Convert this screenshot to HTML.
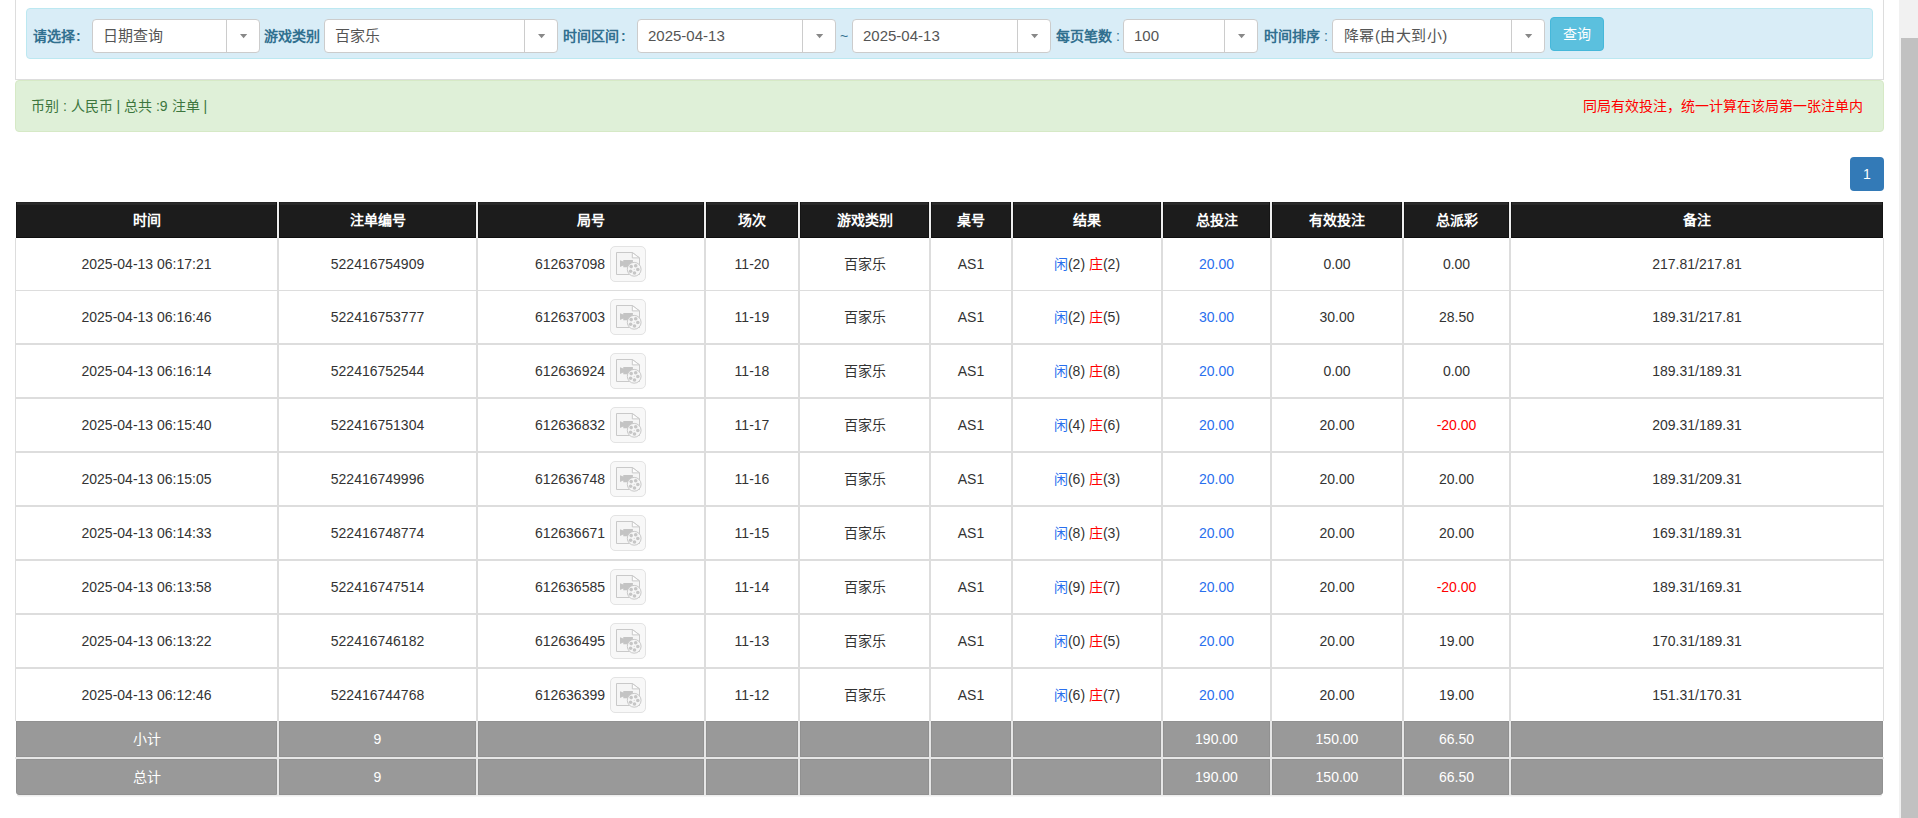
<!DOCTYPE html>
<html lang="zh-CN"><head><meta charset="utf-8"><style>
*{box-sizing:border-box}
html,body{margin:0;padding:0;width:1918px;height:818px;overflow:hidden;background:#fff;font-family:"Liberation Sans",sans-serif;font-size:14px;color:#333}
.a{position:absolute}
.t{position:absolute;white-space:nowrap;line-height:20px}
.c{text-align:center}
.lbl{color:#31708f;font-weight:bold;font-size:14px}
.sel{position:absolute;top:19px;height:34px;background:#fff;border:1px solid #ccc;border-radius:4px}
.sel .v{position:absolute;left:10px;top:6px;line-height:20px;font-size:15px;color:#555;white-space:nowrap}
.sel .d{position:absolute;right:0;top:0;bottom:0;width:33px;border-left:1px solid #ccc}
.sel .d svg{position:absolute;left:13px;top:13px}
.vl{position:absolute;width:2px;background:#ddd}
.hl{position:absolute;height:1px;background:#ddd}
.ib{position:absolute;width:36px;height:36px;border:1px solid #e3e3e3;border-radius:5px;background:#f8f8f8}
.ib svg{position:absolute;left:5px;top:5px}
.th{background:linear-gradient(#232323 0,#232323 1px,#2b2b2b 1px,#2a2a2a 2px,#252525 3px,#1c1c1c 3px);border-left:1px solid #151515;border-right:1px solid #151515;border-bottom:1px solid #0e0e0e}
.tf{background:#999;border:1px solid #919191}
.blue{color:#2a6fee}
.red{color:#f00}
</style></head><body>

<div class="a" style="left:15px;top:0;width:1px;height:80px;background:#ddd"></div>
<div class="a" style="left:1883px;top:0;width:1px;height:80px;background:#ddd"></div>
<div class="a" style="left:15px;top:79px;width:1869px;height:1px;background:#ddd"></div>
<div class="a" style="left:26px;top:8px;width:1847px;height:51px;background:#d9edf7;border:1px solid #bce8f1;border-radius:4px"></div>
<div class="t lbl" style="left:33px;top:26px">请选择<span style="margin-left:1px">:</span></div>
<div class="sel" style="left:92px;width:168px"><div class="v" style="">日期查询</div><div class="d"><svg width="8" height="6"><path d="M0 1H7.2L3.6 5.2Z" fill="#888"/></svg></div></div>
<div class="t lbl" style="left:264px;top:26px">游戏类别</div>
<div class="sel" style="left:324px;width:234px"><div class="v" style="">百家乐</div><div class="d"><svg width="8" height="6"><path d="M0 1H7.2L3.6 5.2Z" fill="#888"/></svg></div></div>
<div class="t lbl" style="left:563px;top:26px">时间区间<span style="margin-left:2px">:</span></div>
<div class="sel" style="left:637px;width:199px"><div class="v" style="">2025-04-13</div><div class="d"><svg width="8" height="6"><path d="M0 1H7.2L3.6 5.2Z" fill="#888"/></svg></div></div>
<div class="t" style="left:840px;top:26px;color:#31708f">~</div>
<div class="sel" style="left:852px;width:199px"><div class="v" style="">2025-04-13</div><div class="d"><svg width="8" height="6"><path d="M0 1H7.2L3.6 5.2Z" fill="#888"/></svg></div></div>
<div class="t lbl" style="left:1056px;top:26px">每页笔数<span style="font-weight:normal"> :</span></div>
<div class="sel" style="left:1123px;width:135px"><div class="v" style="">100</div><div class="d"><svg width="8" height="6"><path d="M0 1H7.2L3.6 5.2Z" fill="#888"/></svg></div></div>
<div class="t lbl" style="left:1264px;top:26px">时间排序<span style="font-weight:normal"> :</span></div>
<div class="sel" style="left:1332px;width:213px"><div class="v" style="left:11px;letter-spacing:0.45px">降幂(由大到小)</div><div class="d"><svg width="8" height="6"><path d="M0 1H7.2L3.6 5.2Z" fill="#888"/></svg></div></div>
<div class="a" style="left:1550px;top:17px;width:54px;height:34px;background:#5bc0de;border:1px solid #46b8da;border-radius:4px"></div>
<div class="t" style="left:1563px;top:24px;color:#fff">查询</div>
<div class="a" style="left:15px;top:80px;width:1869px;height:52px;background:#dff0d8;border:1px solid #d6e9c6;border-radius:4px"></div>
<div class="t" style="left:31px;top:96px;color:#3c763d">币别 : 人民币 | 总共 :9 注单 |</div>
<div class="t" style="left:1583px;top:96px;color:#f00">同局有效投注，统一计算在该局第一张注单内</div>
<div class="a" style="left:1850px;top:157px;width:34px;height:34px;background:#337ab7;border-radius:4px"></div>
<div class="t c" style="left:1850px;top:164px;width:34px;color:#fff">1</div>
<div class="a th" style="left:16px;top:202px;width:261px;height:36px"></div>
<div class="t c" style="left:16px;top:210px;width:261px;color:#fff;font-weight:bold">时间</div>
<div class="a th" style="left:279px;top:202px;width:197px;height:36px"></div>
<div class="t c" style="left:279px;top:210px;width:197px;color:#fff;font-weight:bold">注单编号</div>
<div class="a th" style="left:478px;top:202px;width:226px;height:36px"></div>
<div class="t c" style="left:478px;top:210px;width:226px;color:#fff;font-weight:bold">局号</div>
<div class="a th" style="left:706px;top:202px;width:92px;height:36px"></div>
<div class="t c" style="left:706px;top:210px;width:92px;color:#fff;font-weight:bold">场次</div>
<div class="a th" style="left:800px;top:202px;width:129px;height:36px"></div>
<div class="t c" style="left:800px;top:210px;width:129px;color:#fff;font-weight:bold">游戏类别</div>
<div class="a th" style="left:931px;top:202px;width:80px;height:36px"></div>
<div class="t c" style="left:931px;top:210px;width:80px;color:#fff;font-weight:bold">桌号</div>
<div class="a th" style="left:1013px;top:202px;width:148px;height:36px"></div>
<div class="t c" style="left:1013px;top:210px;width:148px;color:#fff;font-weight:bold">结果</div>
<div class="a th" style="left:1163px;top:202px;width:107px;height:36px"></div>
<div class="t c" style="left:1163px;top:210px;width:107px;color:#fff;font-weight:bold">总投注</div>
<div class="a th" style="left:1272px;top:202px;width:130px;height:36px"></div>
<div class="t c" style="left:1272px;top:210px;width:130px;color:#fff;font-weight:bold">有效投注</div>
<div class="a th" style="left:1404px;top:202px;width:105px;height:36px"></div>
<div class="t c" style="left:1404px;top:210px;width:105px;color:#fff;font-weight:bold">总派彩</div>
<div class="a th" style="left:1511px;top:202px;width:372px;height:36px"></div>
<div class="t c" style="left:1511px;top:210px;width:372px;color:#fff;font-weight:bold">备注</div>
<div class="vl" style="left:277px;top:202px;height:36px;background:#eeeeee"></div>
<div class="vl" style="left:476px;top:202px;height:36px;background:#eeeeee"></div>
<div class="vl" style="left:704px;top:202px;height:36px;background:#eeeeee"></div>
<div class="vl" style="left:798px;top:202px;height:36px;background:#eeeeee"></div>
<div class="vl" style="left:929px;top:202px;height:36px;background:#eeeeee"></div>
<div class="vl" style="left:1011px;top:202px;height:36px;background:#eeeeee"></div>
<div class="vl" style="left:1161px;top:202px;height:36px;background:#eeeeee"></div>
<div class="vl" style="left:1270px;top:202px;height:36px;background:#eeeeee"></div>
<div class="vl" style="left:1402px;top:202px;height:36px;background:#eeeeee"></div>
<div class="vl" style="left:1509px;top:202px;height:36px;background:#eeeeee"></div>
<div class="t c" style="left:16px;top:254px;width:261px">2025-04-13 06:17:21</div>
<div class="t c" style="left:279px;top:254px;width:197px">522416754909</div>
<div class="t" style="left:478px;top:254px;width:127px;text-align:right">612637098</div>
<div class="ib" style="left:610px;top:246px"><svg width="27" height="26" viewBox="0 0 27 26" style="overflow:visible"><path d="M0.5 0.5H16.3L23.5 5.9V22.5H0.5Z" fill="#f5f5f5" stroke="#c9c9c9" stroke-width="1"/><path d="M16.3 0.5V5.9H23.5Z" fill="#fdfdfd" stroke="#c9c9c9" stroke-width="1"/><path d="M4 8.2L7.3 9.6V8H16.9V15.2H7.3V13.6L4 15Z" fill="#c4c4c4"/><circle cx="18.2" cy="17.3" r="6.9" fill="#f6f6f6" stroke="#c9c9c9" stroke-width="1"/><circle cx="15.2" cy="14.6" r="1.8" fill="#c6c6c6"/><circle cx="19.7" cy="13.8" r="1.8" fill="#c6c6c6"/><circle cx="21.8" cy="17.5" r="1.8" fill="#c6c6c6"/><circle cx="18.5" cy="21" r="1.8" fill="#c6c6c6"/><circle cx="14.6" cy="19.3" r="1.8" fill="#c6c6c6"/><circle cx="18.2" cy="17.4" r="0.6" fill="#d5d5d5"/></svg></div>
<div class="t c" style="left:706px;top:254px;width:92px">11-20</div>
<div class="t c" style="left:800px;top:254px;width:129px">百家乐</div>
<div class="t c" style="left:931px;top:254px;width:80px">AS1</div>
<div class="t c" style="left:1013px;top:254px;width:148px"><span class="blue">闲</span>(2) <span class="red">庄</span>(2)</div>
<div class="t c" style="left:1163px;top:254px;width:107px"><span class="blue">20.00</span></div>
<div class="t c" style="left:1272px;top:254px;width:130px">0.00</div>
<div class="t c" style="left:1404px;top:254px;width:105px">0.00</div>
<div class="t c" style="left:1511px;top:254px;width:372px">217.81/217.81</div>
<div class="hl" style="left:15px;top:290px;width:1869px;height:1px"></div>
<div class="t c" style="left:16px;top:307px;width:261px">2025-04-13 06:16:46</div>
<div class="t c" style="left:279px;top:307px;width:197px">522416753777</div>
<div class="t" style="left:478px;top:307px;width:127px;text-align:right">612637003</div>
<div class="ib" style="left:610px;top:299px"><svg width="27" height="26" viewBox="0 0 27 26" style="overflow:visible"><path d="M0.5 0.5H16.3L23.5 5.9V22.5H0.5Z" fill="#f5f5f5" stroke="#c9c9c9" stroke-width="1"/><path d="M16.3 0.5V5.9H23.5Z" fill="#fdfdfd" stroke="#c9c9c9" stroke-width="1"/><path d="M4 8.2L7.3 9.6V8H16.9V15.2H7.3V13.6L4 15Z" fill="#c4c4c4"/><circle cx="18.2" cy="17.3" r="6.9" fill="#f6f6f6" stroke="#c9c9c9" stroke-width="1"/><circle cx="15.2" cy="14.6" r="1.8" fill="#c6c6c6"/><circle cx="19.7" cy="13.8" r="1.8" fill="#c6c6c6"/><circle cx="21.8" cy="17.5" r="1.8" fill="#c6c6c6"/><circle cx="18.5" cy="21" r="1.8" fill="#c6c6c6"/><circle cx="14.6" cy="19.3" r="1.8" fill="#c6c6c6"/><circle cx="18.2" cy="17.4" r="0.6" fill="#d5d5d5"/></svg></div>
<div class="t c" style="left:706px;top:307px;width:92px">11-19</div>
<div class="t c" style="left:800px;top:307px;width:129px">百家乐</div>
<div class="t c" style="left:931px;top:307px;width:80px">AS1</div>
<div class="t c" style="left:1013px;top:307px;width:148px"><span class="blue">闲</span>(2) <span class="red">庄</span>(5)</div>
<div class="t c" style="left:1163px;top:307px;width:107px"><span class="blue">30.00</span></div>
<div class="t c" style="left:1272px;top:307px;width:130px">30.00</div>
<div class="t c" style="left:1404px;top:307px;width:105px">28.50</div>
<div class="t c" style="left:1511px;top:307px;width:372px">189.31/217.81</div>
<div class="hl" style="left:15px;top:343px;width:1869px;height:2px"></div>
<div class="t c" style="left:16px;top:361px;width:261px">2025-04-13 06:16:14</div>
<div class="t c" style="left:279px;top:361px;width:197px">522416752544</div>
<div class="t" style="left:478px;top:361px;width:127px;text-align:right">612636924</div>
<div class="ib" style="left:610px;top:353px"><svg width="27" height="26" viewBox="0 0 27 26" style="overflow:visible"><path d="M0.5 0.5H16.3L23.5 5.9V22.5H0.5Z" fill="#f5f5f5" stroke="#c9c9c9" stroke-width="1"/><path d="M16.3 0.5V5.9H23.5Z" fill="#fdfdfd" stroke="#c9c9c9" stroke-width="1"/><path d="M4 8.2L7.3 9.6V8H16.9V15.2H7.3V13.6L4 15Z" fill="#c4c4c4"/><circle cx="18.2" cy="17.3" r="6.9" fill="#f6f6f6" stroke="#c9c9c9" stroke-width="1"/><circle cx="15.2" cy="14.6" r="1.8" fill="#c6c6c6"/><circle cx="19.7" cy="13.8" r="1.8" fill="#c6c6c6"/><circle cx="21.8" cy="17.5" r="1.8" fill="#c6c6c6"/><circle cx="18.5" cy="21" r="1.8" fill="#c6c6c6"/><circle cx="14.6" cy="19.3" r="1.8" fill="#c6c6c6"/><circle cx="18.2" cy="17.4" r="0.6" fill="#d5d5d5"/></svg></div>
<div class="t c" style="left:706px;top:361px;width:92px">11-18</div>
<div class="t c" style="left:800px;top:361px;width:129px">百家乐</div>
<div class="t c" style="left:931px;top:361px;width:80px">AS1</div>
<div class="t c" style="left:1013px;top:361px;width:148px"><span class="blue">闲</span>(8) <span class="red">庄</span>(8)</div>
<div class="t c" style="left:1163px;top:361px;width:107px"><span class="blue">20.00</span></div>
<div class="t c" style="left:1272px;top:361px;width:130px">0.00</div>
<div class="t c" style="left:1404px;top:361px;width:105px">0.00</div>
<div class="t c" style="left:1511px;top:361px;width:372px">189.31/189.31</div>
<div class="hl" style="left:15px;top:397px;width:1869px;height:2px"></div>
<div class="t c" style="left:16px;top:415px;width:261px">2025-04-13 06:15:40</div>
<div class="t c" style="left:279px;top:415px;width:197px">522416751304</div>
<div class="t" style="left:478px;top:415px;width:127px;text-align:right">612636832</div>
<div class="ib" style="left:610px;top:407px"><svg width="27" height="26" viewBox="0 0 27 26" style="overflow:visible"><path d="M0.5 0.5H16.3L23.5 5.9V22.5H0.5Z" fill="#f5f5f5" stroke="#c9c9c9" stroke-width="1"/><path d="M16.3 0.5V5.9H23.5Z" fill="#fdfdfd" stroke="#c9c9c9" stroke-width="1"/><path d="M4 8.2L7.3 9.6V8H16.9V15.2H7.3V13.6L4 15Z" fill="#c4c4c4"/><circle cx="18.2" cy="17.3" r="6.9" fill="#f6f6f6" stroke="#c9c9c9" stroke-width="1"/><circle cx="15.2" cy="14.6" r="1.8" fill="#c6c6c6"/><circle cx="19.7" cy="13.8" r="1.8" fill="#c6c6c6"/><circle cx="21.8" cy="17.5" r="1.8" fill="#c6c6c6"/><circle cx="18.5" cy="21" r="1.8" fill="#c6c6c6"/><circle cx="14.6" cy="19.3" r="1.8" fill="#c6c6c6"/><circle cx="18.2" cy="17.4" r="0.6" fill="#d5d5d5"/></svg></div>
<div class="t c" style="left:706px;top:415px;width:92px">11-17</div>
<div class="t c" style="left:800px;top:415px;width:129px">百家乐</div>
<div class="t c" style="left:931px;top:415px;width:80px">AS1</div>
<div class="t c" style="left:1013px;top:415px;width:148px"><span class="blue">闲</span>(4) <span class="red">庄</span>(6)</div>
<div class="t c" style="left:1163px;top:415px;width:107px"><span class="blue">20.00</span></div>
<div class="t c" style="left:1272px;top:415px;width:130px">20.00</div>
<div class="t c" style="left:1404px;top:415px;width:105px"><span class="red">-20.00</span></div>
<div class="t c" style="left:1511px;top:415px;width:372px">209.31/189.31</div>
<div class="hl" style="left:15px;top:451px;width:1869px;height:2px"></div>
<div class="t c" style="left:16px;top:469px;width:261px">2025-04-13 06:15:05</div>
<div class="t c" style="left:279px;top:469px;width:197px">522416749996</div>
<div class="t" style="left:478px;top:469px;width:127px;text-align:right">612636748</div>
<div class="ib" style="left:610px;top:461px"><svg width="27" height="26" viewBox="0 0 27 26" style="overflow:visible"><path d="M0.5 0.5H16.3L23.5 5.9V22.5H0.5Z" fill="#f5f5f5" stroke="#c9c9c9" stroke-width="1"/><path d="M16.3 0.5V5.9H23.5Z" fill="#fdfdfd" stroke="#c9c9c9" stroke-width="1"/><path d="M4 8.2L7.3 9.6V8H16.9V15.2H7.3V13.6L4 15Z" fill="#c4c4c4"/><circle cx="18.2" cy="17.3" r="6.9" fill="#f6f6f6" stroke="#c9c9c9" stroke-width="1"/><circle cx="15.2" cy="14.6" r="1.8" fill="#c6c6c6"/><circle cx="19.7" cy="13.8" r="1.8" fill="#c6c6c6"/><circle cx="21.8" cy="17.5" r="1.8" fill="#c6c6c6"/><circle cx="18.5" cy="21" r="1.8" fill="#c6c6c6"/><circle cx="14.6" cy="19.3" r="1.8" fill="#c6c6c6"/><circle cx="18.2" cy="17.4" r="0.6" fill="#d5d5d5"/></svg></div>
<div class="t c" style="left:706px;top:469px;width:92px">11-16</div>
<div class="t c" style="left:800px;top:469px;width:129px">百家乐</div>
<div class="t c" style="left:931px;top:469px;width:80px">AS1</div>
<div class="t c" style="left:1013px;top:469px;width:148px"><span class="blue">闲</span>(6) <span class="red">庄</span>(3)</div>
<div class="t c" style="left:1163px;top:469px;width:107px"><span class="blue">20.00</span></div>
<div class="t c" style="left:1272px;top:469px;width:130px">20.00</div>
<div class="t c" style="left:1404px;top:469px;width:105px">20.00</div>
<div class="t c" style="left:1511px;top:469px;width:372px">189.31/209.31</div>
<div class="hl" style="left:15px;top:505px;width:1869px;height:2px"></div>
<div class="t c" style="left:16px;top:523px;width:261px">2025-04-13 06:14:33</div>
<div class="t c" style="left:279px;top:523px;width:197px">522416748774</div>
<div class="t" style="left:478px;top:523px;width:127px;text-align:right">612636671</div>
<div class="ib" style="left:610px;top:515px"><svg width="27" height="26" viewBox="0 0 27 26" style="overflow:visible"><path d="M0.5 0.5H16.3L23.5 5.9V22.5H0.5Z" fill="#f5f5f5" stroke="#c9c9c9" stroke-width="1"/><path d="M16.3 0.5V5.9H23.5Z" fill="#fdfdfd" stroke="#c9c9c9" stroke-width="1"/><path d="M4 8.2L7.3 9.6V8H16.9V15.2H7.3V13.6L4 15Z" fill="#c4c4c4"/><circle cx="18.2" cy="17.3" r="6.9" fill="#f6f6f6" stroke="#c9c9c9" stroke-width="1"/><circle cx="15.2" cy="14.6" r="1.8" fill="#c6c6c6"/><circle cx="19.7" cy="13.8" r="1.8" fill="#c6c6c6"/><circle cx="21.8" cy="17.5" r="1.8" fill="#c6c6c6"/><circle cx="18.5" cy="21" r="1.8" fill="#c6c6c6"/><circle cx="14.6" cy="19.3" r="1.8" fill="#c6c6c6"/><circle cx="18.2" cy="17.4" r="0.6" fill="#d5d5d5"/></svg></div>
<div class="t c" style="left:706px;top:523px;width:92px">11-15</div>
<div class="t c" style="left:800px;top:523px;width:129px">百家乐</div>
<div class="t c" style="left:931px;top:523px;width:80px">AS1</div>
<div class="t c" style="left:1013px;top:523px;width:148px"><span class="blue">闲</span>(8) <span class="red">庄</span>(3)</div>
<div class="t c" style="left:1163px;top:523px;width:107px"><span class="blue">20.00</span></div>
<div class="t c" style="left:1272px;top:523px;width:130px">20.00</div>
<div class="t c" style="left:1404px;top:523px;width:105px">20.00</div>
<div class="t c" style="left:1511px;top:523px;width:372px">169.31/189.31</div>
<div class="hl" style="left:15px;top:559px;width:1869px;height:2px"></div>
<div class="t c" style="left:16px;top:577px;width:261px">2025-04-13 06:13:58</div>
<div class="t c" style="left:279px;top:577px;width:197px">522416747514</div>
<div class="t" style="left:478px;top:577px;width:127px;text-align:right">612636585</div>
<div class="ib" style="left:610px;top:569px"><svg width="27" height="26" viewBox="0 0 27 26" style="overflow:visible"><path d="M0.5 0.5H16.3L23.5 5.9V22.5H0.5Z" fill="#f5f5f5" stroke="#c9c9c9" stroke-width="1"/><path d="M16.3 0.5V5.9H23.5Z" fill="#fdfdfd" stroke="#c9c9c9" stroke-width="1"/><path d="M4 8.2L7.3 9.6V8H16.9V15.2H7.3V13.6L4 15Z" fill="#c4c4c4"/><circle cx="18.2" cy="17.3" r="6.9" fill="#f6f6f6" stroke="#c9c9c9" stroke-width="1"/><circle cx="15.2" cy="14.6" r="1.8" fill="#c6c6c6"/><circle cx="19.7" cy="13.8" r="1.8" fill="#c6c6c6"/><circle cx="21.8" cy="17.5" r="1.8" fill="#c6c6c6"/><circle cx="18.5" cy="21" r="1.8" fill="#c6c6c6"/><circle cx="14.6" cy="19.3" r="1.8" fill="#c6c6c6"/><circle cx="18.2" cy="17.4" r="0.6" fill="#d5d5d5"/></svg></div>
<div class="t c" style="left:706px;top:577px;width:92px">11-14</div>
<div class="t c" style="left:800px;top:577px;width:129px">百家乐</div>
<div class="t c" style="left:931px;top:577px;width:80px">AS1</div>
<div class="t c" style="left:1013px;top:577px;width:148px"><span class="blue">闲</span>(9) <span class="red">庄</span>(7)</div>
<div class="t c" style="left:1163px;top:577px;width:107px"><span class="blue">20.00</span></div>
<div class="t c" style="left:1272px;top:577px;width:130px">20.00</div>
<div class="t c" style="left:1404px;top:577px;width:105px"><span class="red">-20.00</span></div>
<div class="t c" style="left:1511px;top:577px;width:372px">189.31/169.31</div>
<div class="hl" style="left:15px;top:613px;width:1869px;height:2px"></div>
<div class="t c" style="left:16px;top:631px;width:261px">2025-04-13 06:13:22</div>
<div class="t c" style="left:279px;top:631px;width:197px">522416746182</div>
<div class="t" style="left:478px;top:631px;width:127px;text-align:right">612636495</div>
<div class="ib" style="left:610px;top:623px"><svg width="27" height="26" viewBox="0 0 27 26" style="overflow:visible"><path d="M0.5 0.5H16.3L23.5 5.9V22.5H0.5Z" fill="#f5f5f5" stroke="#c9c9c9" stroke-width="1"/><path d="M16.3 0.5V5.9H23.5Z" fill="#fdfdfd" stroke="#c9c9c9" stroke-width="1"/><path d="M4 8.2L7.3 9.6V8H16.9V15.2H7.3V13.6L4 15Z" fill="#c4c4c4"/><circle cx="18.2" cy="17.3" r="6.9" fill="#f6f6f6" stroke="#c9c9c9" stroke-width="1"/><circle cx="15.2" cy="14.6" r="1.8" fill="#c6c6c6"/><circle cx="19.7" cy="13.8" r="1.8" fill="#c6c6c6"/><circle cx="21.8" cy="17.5" r="1.8" fill="#c6c6c6"/><circle cx="18.5" cy="21" r="1.8" fill="#c6c6c6"/><circle cx="14.6" cy="19.3" r="1.8" fill="#c6c6c6"/><circle cx="18.2" cy="17.4" r="0.6" fill="#d5d5d5"/></svg></div>
<div class="t c" style="left:706px;top:631px;width:92px">11-13</div>
<div class="t c" style="left:800px;top:631px;width:129px">百家乐</div>
<div class="t c" style="left:931px;top:631px;width:80px">AS1</div>
<div class="t c" style="left:1013px;top:631px;width:148px"><span class="blue">闲</span>(0) <span class="red">庄</span>(5)</div>
<div class="t c" style="left:1163px;top:631px;width:107px"><span class="blue">20.00</span></div>
<div class="t c" style="left:1272px;top:631px;width:130px">20.00</div>
<div class="t c" style="left:1404px;top:631px;width:105px">19.00</div>
<div class="t c" style="left:1511px;top:631px;width:372px">170.31/189.31</div>
<div class="hl" style="left:15px;top:667px;width:1869px;height:2px"></div>
<div class="t c" style="left:16px;top:685px;width:261px">2025-04-13 06:12:46</div>
<div class="t c" style="left:279px;top:685px;width:197px">522416744768</div>
<div class="t" style="left:478px;top:685px;width:127px;text-align:right">612636399</div>
<div class="ib" style="left:610px;top:677px"><svg width="27" height="26" viewBox="0 0 27 26" style="overflow:visible"><path d="M0.5 0.5H16.3L23.5 5.9V22.5H0.5Z" fill="#f5f5f5" stroke="#c9c9c9" stroke-width="1"/><path d="M16.3 0.5V5.9H23.5Z" fill="#fdfdfd" stroke="#c9c9c9" stroke-width="1"/><path d="M4 8.2L7.3 9.6V8H16.9V15.2H7.3V13.6L4 15Z" fill="#c4c4c4"/><circle cx="18.2" cy="17.3" r="6.9" fill="#f6f6f6" stroke="#c9c9c9" stroke-width="1"/><circle cx="15.2" cy="14.6" r="1.8" fill="#c6c6c6"/><circle cx="19.7" cy="13.8" r="1.8" fill="#c6c6c6"/><circle cx="21.8" cy="17.5" r="1.8" fill="#c6c6c6"/><circle cx="18.5" cy="21" r="1.8" fill="#c6c6c6"/><circle cx="14.6" cy="19.3" r="1.8" fill="#c6c6c6"/><circle cx="18.2" cy="17.4" r="0.6" fill="#d5d5d5"/></svg></div>
<div class="t c" style="left:706px;top:685px;width:92px">11-12</div>
<div class="t c" style="left:800px;top:685px;width:129px">百家乐</div>
<div class="t c" style="left:931px;top:685px;width:80px">AS1</div>
<div class="t c" style="left:1013px;top:685px;width:148px"><span class="blue">闲</span>(6) <span class="red">庄</span>(7)</div>
<div class="t c" style="left:1163px;top:685px;width:107px"><span class="blue">20.00</span></div>
<div class="t c" style="left:1272px;top:685px;width:130px">20.00</div>
<div class="t c" style="left:1404px;top:685px;width:105px">19.00</div>
<div class="t c" style="left:1511px;top:685px;width:372px">151.31/170.31</div>
<div class="vl" style="left:15px;top:238px;height:483px;width:1px"></div>
<div class="vl" style="left:277px;top:238px;height:483px;width:2px"></div>
<div class="vl" style="left:476px;top:238px;height:483px;width:2px"></div>
<div class="vl" style="left:704px;top:238px;height:483px;width:2px"></div>
<div class="vl" style="left:798px;top:238px;height:483px;width:2px"></div>
<div class="vl" style="left:929px;top:238px;height:483px;width:2px"></div>
<div class="vl" style="left:1011px;top:238px;height:483px;width:2px"></div>
<div class="vl" style="left:1161px;top:238px;height:483px;width:2px"></div>
<div class="vl" style="left:1270px;top:238px;height:483px;width:2px"></div>
<div class="vl" style="left:1402px;top:238px;height:483px;width:2px"></div>
<div class="vl" style="left:1509px;top:238px;height:483px;width:2px"></div>
<div class="vl" style="left:1883px;top:238px;height:483px;width:1px"></div>
<div class="a tf" style="left:16px;top:721px;width:261px;height:36px;"></div>
<div class="a tf" style="left:279px;top:721px;width:197px;height:36px;"></div>
<div class="a tf" style="left:478px;top:721px;width:226px;height:36px;"></div>
<div class="a tf" style="left:706px;top:721px;width:92px;height:36px;"></div>
<div class="a tf" style="left:800px;top:721px;width:129px;height:36px;"></div>
<div class="a tf" style="left:931px;top:721px;width:80px;height:36px;"></div>
<div class="a tf" style="left:1013px;top:721px;width:148px;height:36px;"></div>
<div class="a tf" style="left:1163px;top:721px;width:107px;height:36px;"></div>
<div class="a tf" style="left:1272px;top:721px;width:130px;height:36px;"></div>
<div class="a tf" style="left:1404px;top:721px;width:105px;height:36px;"></div>
<div class="a tf" style="left:1511px;top:721px;width:372px;height:36px;"></div>
<div class="t c" style="left:16px;top:729px;width:261px;color:#fff">小计</div>
<div class="t c" style="left:279px;top:729px;width:197px;color:#fff">9</div>
<div class="t c" style="left:1163px;top:729px;width:107px;color:#fff">190.00</div>
<div class="t c" style="left:1272px;top:729px;width:130px;color:#fff">150.00</div>
<div class="t c" style="left:1404px;top:729px;width:105px;color:#fff">66.50</div>
<div class="a tf" style="left:16px;top:759px;width:261px;height:36px;border-bottom-left-radius:3px;"></div>
<div class="a tf" style="left:279px;top:759px;width:197px;height:36px;"></div>
<div class="a tf" style="left:478px;top:759px;width:226px;height:36px;"></div>
<div class="a tf" style="left:706px;top:759px;width:92px;height:36px;"></div>
<div class="a tf" style="left:800px;top:759px;width:129px;height:36px;"></div>
<div class="a tf" style="left:931px;top:759px;width:80px;height:36px;"></div>
<div class="a tf" style="left:1013px;top:759px;width:148px;height:36px;"></div>
<div class="a tf" style="left:1163px;top:759px;width:107px;height:36px;"></div>
<div class="a tf" style="left:1272px;top:759px;width:130px;height:36px;"></div>
<div class="a tf" style="left:1404px;top:759px;width:105px;height:36px;"></div>
<div class="a tf" style="left:1511px;top:759px;width:372px;height:36px;border-bottom-right-radius:3px;"></div>
<div class="t c" style="left:16px;top:767px;width:261px;color:#fff">总计</div>
<div class="t c" style="left:279px;top:767px;width:197px;color:#fff">9</div>
<div class="t c" style="left:1163px;top:767px;width:107px;color:#fff">190.00</div>
<div class="t c" style="left:1272px;top:767px;width:130px;color:#fff">150.00</div>
<div class="t c" style="left:1404px;top:767px;width:105px;color:#fff">66.50</div>
<div class="a" style="left:15px;top:757px;width:1869px;height:2px;background:#e6e6e6"></div>
<div class="vl" style="left:277px;top:721px;height:74px;background:#e6e6e6"></div>
<div class="vl" style="left:476px;top:721px;height:74px;background:#e6e6e6"></div>
<div class="vl" style="left:704px;top:721px;height:74px;background:#e6e6e6"></div>
<div class="vl" style="left:798px;top:721px;height:74px;background:#e6e6e6"></div>
<div class="vl" style="left:929px;top:721px;height:74px;background:#e6e6e6"></div>
<div class="vl" style="left:1011px;top:721px;height:74px;background:#e6e6e6"></div>
<div class="vl" style="left:1161px;top:721px;height:74px;background:#e6e6e6"></div>
<div class="vl" style="left:1270px;top:721px;height:74px;background:#e6e6e6"></div>
<div class="vl" style="left:1402px;top:721px;height:74px;background:#e6e6e6"></div>
<div class="vl" style="left:1509px;top:721px;height:74px;background:#e6e6e6"></div>
<div class="a" style="left:17px;top:795px;width:1865px;height:1px;background:#eeeeee"></div>
<div class="a" style="left:18px;top:796px;width:1863px;height:1px;background:#f6f6f6"></div>
<div class="a" style="left:1899px;top:0;width:19px;height:818px;background:#f1f1f1"></div>
<div class="a" style="left:1901px;top:38px;width:17px;height:780px;background:#c1c1c1"></div>
</body></html>
